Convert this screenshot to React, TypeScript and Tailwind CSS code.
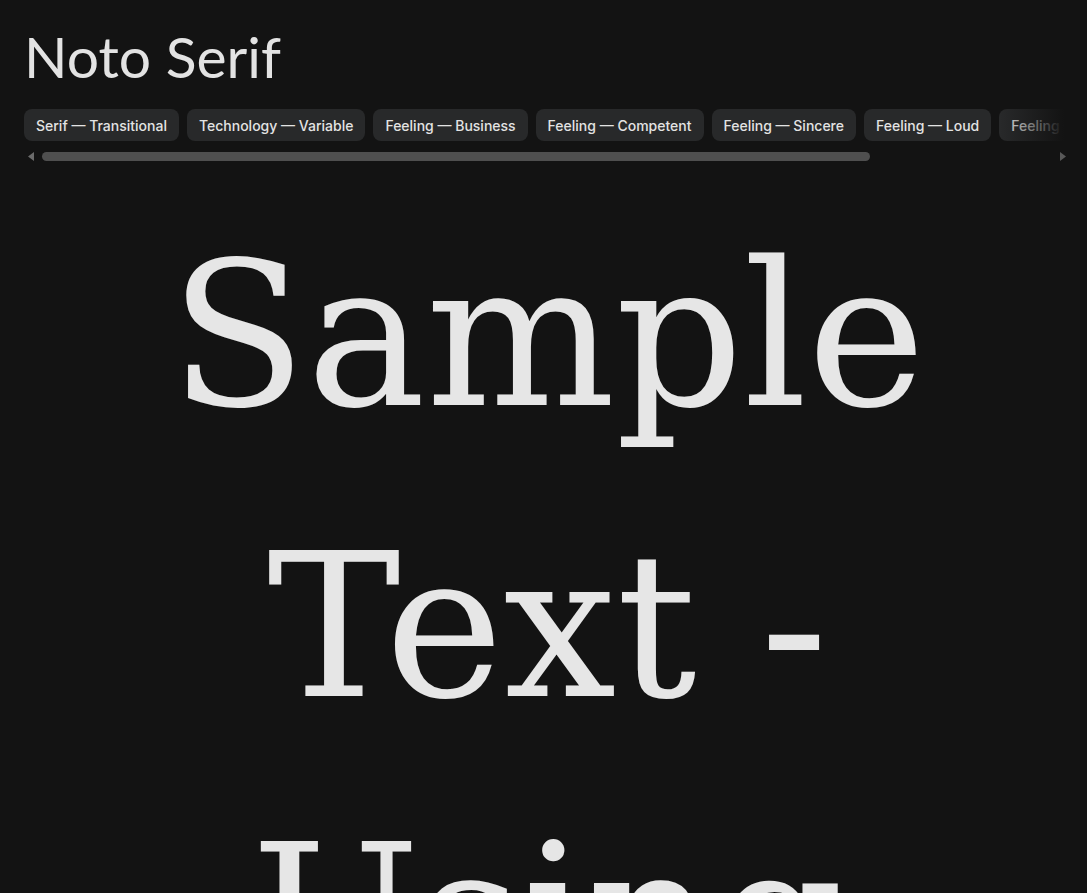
const tags = [
  "Serif — Transitional",
  "Technology — Variable",
  "Feeling — Business",
  "Feeling — Competent",
  "Feeling — Sincere",
  "Feeling — Loud",
  "Feeling — Calm",
  "Appearance — Serif",
];

// headless chrome hides native scrollbars, so the track is drawn by hand
function ScrollTrack() {
  return (
    <div className="flex h-[10px] items-center pl-1 pr-[5px]">
      <svg width="6" height="9" viewBox="0 0 6 9" className="shrink-0">
        <path d="M6 0 L0 4.5 L6 9 Z" fill="#6b6b6b" />
      </svg>
      <div className="ml-2 h-[9px] w-[828px] rounded-full bg-[#4f4f4f]" />
      <div className="flex-1" />
      <svg width="6" height="9" viewBox="0 0 6 9" className="shrink-0">
        <path d="M0 0 L6 4.5 L0 9 Z" fill="#585858" />
      </svg>
    </div>
  );
}

function TagRow() {
  return (
    <div>
      <div className="relative mr-[7px]">
        <div className="flex gap-2 overflow-x-auto [scrollbar-width:none]">
          {tags.map((tag) => (
            <span
              key={tag}
              className="flex h-8 shrink-0 items-center whitespace-nowrap rounded-lg bg-[#28292a] px-3 font-['Inter',sans-serif] text-[14px] font-medium text-[#e3e3e3]"
            >
              {tag}
            </span>
          ))}
        </div>
        <div className="pointer-events-none absolute right-0 top-0 h-8 w-[64px] bg-gradient-to-r from-[#131313]/0 to-[#131313]" />
      </div>
      <div className="mt-[10px]">
        <ScrollTrack />
      </div>
    </div>
  );
}

export default function App() {
  return (
    <div className="min-h-screen overflow-hidden bg-[#131313] pl-6 pr-4 pt-6 text-[#e3e3e3]">
      <h1 className="font-['Lato',sans-serif] text-[57px] font-normal leading-[64px]">
        Noto Serif
      </h1>
      <div className="mt-[21px]">
        <TagRow />
      </div>
      <p className="mt-[29px] text-center font-['DejaVu_Serif',serif] text-[200px] leading-[291px] text-[#e6e6e6]">
        Sample Text - Using Noto Serif
      </p>
    </div>
  );
}
